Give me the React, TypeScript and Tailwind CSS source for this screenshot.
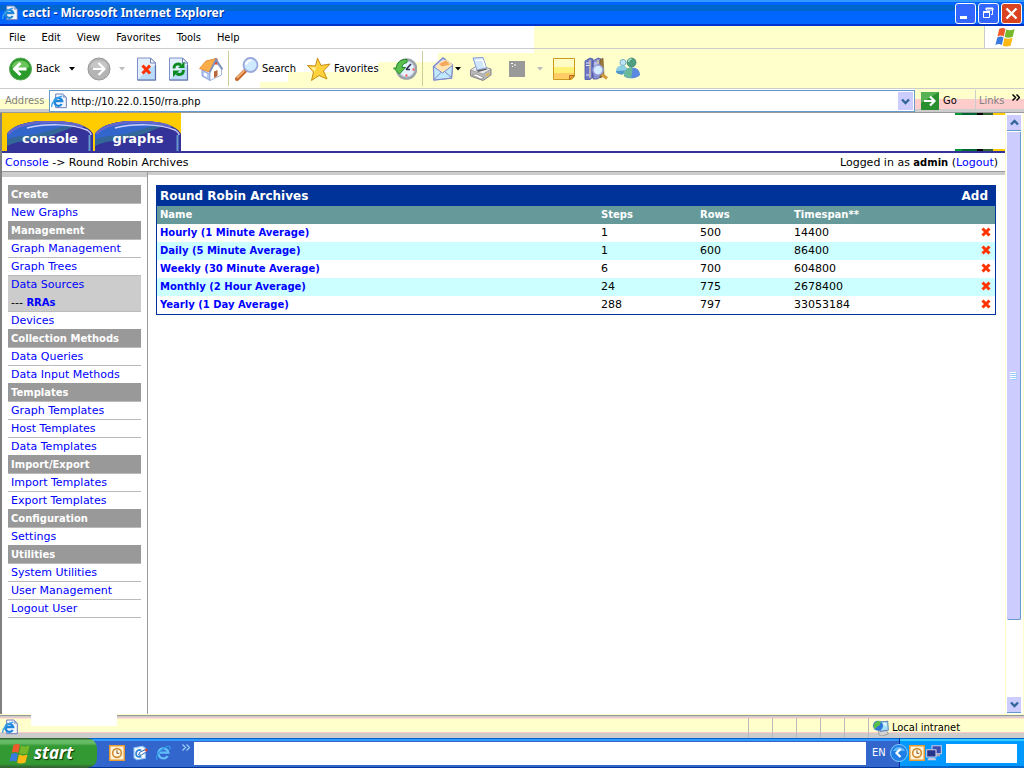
import { ReactNode } from "react";

type MenuItem = { label: string; kind: "header" | "link" | "active" | "sub" };

const menuBar = ["File", "Edit", "View", "Favorites", "Tools", "Help"];

const sideMenu: MenuItem[] = [
  { label: "Create", kind: "header" },
  { label: "New Graphs", kind: "link" },
  { label: "Management", kind: "header" },
  { label: "Graph Management", kind: "link" },
  { label: "Graph Trees", kind: "link" },
  { label: "Data Sources", kind: "active" },
  { label: "RRAs", kind: "sub" },
  { label: "Devices", kind: "link" },
  { label: "Collection Methods", kind: "header" },
  { label: "Data Queries", kind: "link" },
  { label: "Data Input Methods", kind: "link" },
  { label: "Templates", kind: "header" },
  { label: "Graph Templates", kind: "link" },
  { label: "Host Templates", kind: "link" },
  { label: "Data Templates", kind: "link" },
  { label: "Import/Export", kind: "header" },
  { label: "Import Templates", kind: "link" },
  { label: "Export Templates", kind: "link" },
  { label: "Configuration", kind: "header" },
  { label: "Settings", kind: "link" },
  { label: "Utilities", kind: "header" },
  { label: "System Utilities", kind: "link" },
  { label: "User Management", kind: "link" },
  { label: "Logout User", kind: "link" },
];

const archives = [
  { name: "Hourly (1 Minute Average)", steps: 1, rows: 500, timespan: 14400 },
  { name: "Daily (5 Minute Average)", steps: 1, rows: 600, timespan: 86400 },
  { name: "Weekly (30 Minute Average)", steps: 6, rows: 700, timespan: 604800 },
  { name: "Monthly (2 Hour Average)", steps: 24, rows: 775, timespan: 2678400 },
  { name: "Yearly (1 Day Average)", steps: 288, rows: 797, timespan: 33053184 },
];

/* ---------- icons ---------- */

function Icon({ size = 24, children }: { size?: number; children: ReactNode }) {
  return (
    <svg width={size} height={size} viewBox="0 0 24 24" className="shrink-0" aria-hidden="true">
      {children}
    </svg>
  );
}

function Caret({ className = "" }: { className?: string }) {
  return (
    <svg width="6" height="4" viewBox="0 0 6 4" className={`shrink-0 ${className}`} aria-hidden="true">
      <path d="M0 0h6L3 3.5z" fill="currentColor" />
    </svg>
  );
}

function PageShape() {
  return (
    <>
      <path d="M2.500 1h13l5 5v17h-18z" fill="#e2effd" stroke="#8090c8" />
      <path d="M3 22.500L14 11l6-2v13.500z" fill="#b8dcfa" />
      <path d="M20.500 8v15h-18" fill="none" stroke="#5f6ea8" strokeWidth="1.200" />
      <path d="M15.500 1v5h5z" fill="#fff" stroke="#7080b8" />
    </>
  );
}

function IePage({ size = 16 }: { size?: number }) {
  return (
    <Icon size={size}>
      <path d="M7 1.500h11l5 5V22H7z" fill="#f4f7ff" stroke="#6b7fb8" strokeWidth="1.500" />
      <path d="M18 1v6h5z" fill="#99a8d8" />
      <path
        d="M16 16.500a6 6 0 1 1 .8-4.500H5"
        fill="none"
        stroke="#1d86d8"
        strokeWidth="3.400"
      />
      <path d="M1.500 21C-1 15 9 5.500 17 4.500" fill="none" stroke="#3fa4ea" strokeWidth="2" />
    </Icon>
  );
}

function IeLogo({ size = 16 }: { size?: number }) {
  return (
    <Icon size={size}>
      <path d="M19 16.500a7.500 7.500 0 1 1 1-5H6" fill="none" stroke="#63bdf8" strokeWidth="3.600" />
      <path d="M3 22C-1 16 13 2 21 2c3 0 2 3 1 5" fill="none" stroke="#2f97e8" strokeWidth="1.800" />
    </Icon>
  );
}

function WinFlag({ size = 20 }: { size?: number }) {
  return (
    <Icon size={size}>
      <path d="M5 2.500C8 .8 10.500 1 12.500 2.300l-2 9C8.500 10 6 9.800 3 11.300z" fill="#f0592a" />
      <path d="M13.500 3c3 1.300 6 1.300 10-.5l-2.200 9.300c-3.500 1.500-7 1.500-9.800.2z" fill="#76b82a" />
      <path d="M2.700 12.500c3-1.400 5.500-1.300 7.500 0l-2 9C6 20 3.500 20 .5 21.500z" fill="#3a7be0" />
      <path d="M11.300 13.200c2.800 1.300 6 1.300 9.800-.2l-2.200 9.300c-3.500 1.500-7 1.500-9.600.2z" fill="#fdb913" />
    </Icon>
  );
}

function BackIcon() {
  return (
    <Icon>
      <circle cx="12.500" cy="12" r="11" fill="#2a9a2a" stroke="#5aa85a" />
      <path d="M3.500 10a9.500 9.500 0 0 1 18 0c-5 2.500-12 2.500-18 0z" fill="#6cc45c" />
      <path d="M12.500 6L6.500 12l6 6M7 12h11.500" fill="none" stroke="#fff" strokeWidth="3" />
    </Icon>
  );
}

function ForwardIcon() {
  return (
    <Icon>
      <circle cx="12" cy="12" r="11" fill="#b4b4b4" stroke="#999" />
      <path d="M3 10a9.500 9.500 0 0 1 18 0c-5 2.500-12 2.500-18 0z" fill="#c6c6c6" />
      <path d="M11.500 6l6 6-6 6M17 12H6" fill="none" stroke="#fff" strokeWidth="2.200" />
    </Icon>
  );
}

function StopIcon() {
  return (
    <Icon>
      <PageShape />
      <path d="M7.500 8.500l7.500 8M15 8.500l-7.500 8" stroke="#ff3300" strokeWidth="3" />
    </Icon>
  );
}

function RefreshIcon() {
  return (
    <Icon>
      <PageShape />
      <path d="M7 11.500C7 7 11 6 14 8" fill="none" stroke="#0a8a1e" strokeWidth="2.800" />
      <path d="M11 11h6.500V4.500z" fill="#0a8a1e" />
      <path d="M16.500 13c0 4.500-4 5.500-7 3.500" fill="none" stroke="#0a8a1e" strokeWidth="2.800" />
      <path d="M12.500 13.500H6V20z" fill="#0a8a1e" />
    </Icon>
  );
}

function HomeIcon() {
  return (
    <Icon>
      <path d="M3 13l8 4v6.500L3 19z" fill="#b4c8f4" stroke="#8098d4" strokeWidth=".8" />
      <path d="M11 14l6-8.500 5.500 7V18L11 23.500z" fill="#fff" stroke="#90a4d8" strokeWidth=".8" />
      <path d="M15.500 1.500h3v6h-3z" fill="#d8452a" />
      <path d="M.5 11.500L7 4l10-2.500L10.500 15z" fill="#fbae48" stroke="#d98332" strokeWidth=".8" />
      <path d="M10.500 15.500L17 2.500l6.500 10" fill="none" stroke="#8090b8" strokeWidth="1.800" />
      <path d="M15 14.500l3.500-1.500v6L15 21z" fill="#b8673a" />
      <path d="M5 15.500l3 1.500v3l-3-1.500z" fill="#fff" />
    </Icon>
  );
}

function SearchIcon() {
  return (
    <Icon>
      <path d="M2 22l8.500-8.500" stroke="#c66a2e" strokeWidth="4" strokeLinecap="round" />
      <path d="M2 21L9.500 13.500" stroke="#f8b878" strokeWidth="1.600" />
      <circle cx="15.500" cy="8" r="7" fill="#cfeaff" stroke="#98a8dc" strokeWidth="1.800" />
      <path d="M11 7.500a5 5 0 0 1 5.500-4" fill="none" stroke="#fff" strokeWidth="2.200" />
    </Icon>
  );
}

function StarIcon() {
  return (
    <Icon>
      <path
        d="M10.500 1l3.500 7.500 9-1.500-6.500 7 3.500 8-8-3.500L4.500 23.500l2-8.500L.5 8.500l8 .5z"
        fill="#ffd23c"
        stroke="#c98a14"
        strokeLinejoin="round"
      />
      <path d="M10.500 4l-1.300 6.500-6-.5 4.500 4.500-1 5z" fill="#fff2a0" />
    </Icon>
  );
}

function HistoryIcon() {
  return (
    <Icon>
      <circle cx="13.500" cy="12" r="9.500" fill="#e4f2fd" stroke="#9aa4a8" strokeWidth="2.600" />
      <circle cx="13.500" cy="12" r="8" fill="none" stroke="#b8c4d8" />
      <path d="M13 12.500l5-5.500M13 12.500h4" stroke="#335" strokeWidth="1.600" />
      <path d="M13.500 17.500v2M19.500 12.500h2" stroke="#f44" strokeWidth="1.800" />
      <path d="M14 2.500C7.500 2 3.500 6 3.500 11H.5l6 6 6-6.500H9C9 8 11 6 14 5.500z" fill="#5cc04e" stroke="#1f8a2a" />
    </Icon>
  );
}

function MailIcon() {
  return (
    <Icon>
      <path d="M2.500 9.500L12 1l9.500 7-1 13L3 23z" fill="#c6dcfb" stroke="#8088c8" strokeWidth="1.400" />
      <path d="M5 9l5-4.500 6-2 5 5-2 7-8 3-6-4z" fill="#ffe4b4" />
      <path d="M8 7l7-3.500 4 4-8 2z" fill="#f3a85c" />
      <path d="M2.500 9.500l9 6.500 10-7.500-1 12.500L3 23z" fill="#bfe8fc" stroke="#8088c8" />
      <path d="M3 22.500l7.500-7.500M20.500 20.500l-7-6" stroke="#8088c8" />
    </Icon>
  );
}

function PrinterIcon() {
  return (
    <Icon>
      <path d="M1.500 13l7-4.500L22 12v6l-8 5.500L1.500 19z" fill="#b8b8b8" stroke="#868686" />
      <path d="M1.500 13l7-4.500L22 12l-8 5z" fill="#ececec" stroke="#9a9a9a" strokeWidth=".8" />
      <path d="M4 1l10-.5L17.500 11 8 13z" fill="#cfe6fd" stroke="#8a9cdc" />
      <path d="M6.500 3.500l7-.5 2.500 7" fill="none" stroke="#fff" strokeWidth="1.500" />
      <path d="M7 13.500l10-2 1.500 1-9 2.500z" fill="#666" />
      <path d="M3 18l9 4 3-1.500-8-3.500z" fill="#fff" stroke="#8a8a8a" strokeWidth=".7" />
      <path d="M17 18.500l3-2" stroke="#e8b83a" strokeWidth="1.600" />
    </Icon>
  );
}

function EditIcon() {
  return (
    <Icon>
      <path d="M4 4h16v16H4z" fill="#999" />
      <path d="M6 6h2v1H6zM9 7.500h2v1H9zM7 9h1v1H7z" fill="#fff" />
    </Icon>
  );
}

function NoteIcon() {
  return (
    <Icon>
      <path d="M1.500 1.500h21v18l-3 3h-18z" fill="#fff176" stroke="#c99a1c" />
      <path d="M2 2h20v8H2z" fill="#fffbc4" />
      <path d="M2 16h20v3.500l-3 2.500H2z" fill="#ffcc66" />
      <path d="M17.500 22.500v-4h5z" fill="#f0a040" stroke="#b5701a" />
    </Icon>
  );
}

function ResearchIcon() {
  return (
    <Icon>
      <path d="M1 4l5-3 3 1v18l-3 2.500H1z" fill="#7078c8" stroke="#4850a0" strokeWidth=".8" />
      <path d="M9 4l5-3 3 1v18l-4 2H9z" fill="#8890d0" stroke="#4850a0" strokeWidth=".8" />
      <path d="M16 3l3-2 1 18-4 2z" fill="#9a7a3a" stroke="#6a5220" strokeWidth=".6" />
      <path d="M2 6h4M2 8.500h4M2 18h4M10 6h4M10 8h3" stroke="#e4e8ff" />
      <path d="M6 3v18M14 3v4" stroke="#d8c89a" strokeWidth="1.400" />
      <path d="M18 17.500l5 4" stroke="#d09a3e" strokeWidth="3" />
      <circle cx="14" cy="13" r="5" fill="#d4ecff" stroke="#98a0dc" strokeWidth="1.600" />
    </Icon>
  );
}

function MessengerIcon() {
  return (
    <Icon>
      <path d="M0 14c0-4 3-5.500 6-5.500s6 1.500 5 6l-4 3c-4 0-7-1-7-3.500z" fill="#8fd0e4" />
      <path d="M0 14c0 2.500 3 3.500 7 3.500l2-4z" fill="#4f98c8" />
      <circle cx="7" cy="5.500" r="3" fill="#bfe4f4" stroke="#6aa8c4" strokeWidth=".9" />
      <path d="M8 19c0-6 3-8.500 8-8.500s8 3 8 7.500c-3 4-13 4.500-16 1z" fill="#5a8ae0" />
      <path d="M8 19c0-6 3-8.500 8-8.500 1 3 0 6-1 10.500-2.500 0-5.500-.5-7-2z" fill="#6ab89a" />
      <circle cx="15.500" cy="5.500" r="4.500" fill="#4f9e82" stroke="#2f7a68" strokeWidth=".7" />
      <path d="M12.500 5a3 3 0 0 1 3-3" fill="none" stroke="#a8dcc8" strokeWidth="1.600" />
    </Icon>
  );
}

function ClockIcon() {
  return (
    <Icon size={16}>
      <path d="M1 1h22v22H1z" fill="#fff3d8" stroke="#e89a34" strokeWidth="2.500" />
      <circle cx="12" cy="12" r="6.500" fill="#fffbe8" stroke="#d08c2e" strokeWidth="2.400" />
      <path d="M12 8v4.500h3.500" fill="none" stroke="#8a5a20" strokeWidth="1.600" />
    </Icon>
  );
}

function DesktopIcon() {
  return (
    <Icon size={16}>
      <path d="M3 4l13-2 4 3v15l-13 2-4-3z" fill="#f4f9ff" stroke="#8cc4f4" strokeWidth="1.600" />
      <path d="M14 17c-5 2-8 0-8-4s4-7 8-5" fill="none" stroke="#2c86d8" strokeWidth="2.600" />
      <path d="M10 15l1.500-4 8.500-4 2 3-8 5z" fill="#fff" stroke="#1f5fb0" strokeWidth="1.400" />
      <path d="M19 7l3-2 2 3-3 2z" fill="#e0442a" />
    </Icon>
  );
}

function NetworkIcon() {
  return (
    <Icon size={16}>
      <path d="M9 1h14v12H9z" fill="#3c4cae" stroke="#c8cfe8" strokeWidth="1.600" />
      <path d="M14 13h7v4h-7z" fill="#aab" />
      <path d="M1 7h14v11H1z" fill="#26348c" stroke="#c8cfe8" strokeWidth="1.600" />
      <path d="M4 19h9l3 4H2z" fill="#c8cbe0" />
    </Icon>
  );
}

function IntranetIcon() {
  return (
    <Icon size={16}>
      <path d="M8 16l12-1 3 6-10 3-4-2z" fill="#d4d4d4" stroke="#888" />
      <path d="M8 3l14-1 1 13-12 2z" fill="#a4e0fa" stroke="#6a86b8" strokeWidth="1.600" />
      <path d="M13 5l7-.5.5 6z" fill="#dff6ff" />
      <circle cx="7.500" cy="8.500" r="7.500" fill="#2f76d8" />
      <path d="M3 4c3-3 7-3 9-1l-2 5-4 2-3 4C0 11 0 7 3 4z" fill="#5cc048" />
    </Icon>
  );
}

function DeleteIcon() {
  return (
    <svg width="10" height="10" viewBox="0 0 10 10" className="block" aria-hidden="true">
      <path d="M1.500 1.500l7 7M8.500 1.500l-7 7" stroke="#ff3300" strokeWidth="3" />
    </svg>
  );
}

/* ---------- browser chrome ---------- */

function TitleBar() {
  return (
    <header className="flex h-[26px] shrink-0 items-center bg-[linear-gradient(#39f_2px,#06f_2px,#06f_5px,#06c_5px,#06c_11px,#06f_11px,#06f_24px,#03c_24px)] px-[2px]">
      <IePage />
      <h1 className="ml-1 flex-1 font-['Noto_Sans',sans-serif] text-[12px] leading-4 font-bold text-white [text-shadow:1px_1px_0_#003399]">
        cacti - Microsoft Internet Explorer
      </h1>
      <div className="flex gap-[2px]">
        <button aria-label="Minimize" className="h-[21px] w-[21px] rounded-[3px] border border-white bg-[#36f]">
          <svg width="19" height="19" viewBox="0 0 19 19" aria-hidden="true">
            <path d="M4 12h7v3H4z" fill="#fff" />
          </svg>
        </button>
        <button aria-label="Restore" className="h-[21px] w-[21px] rounded-[3px] border border-white bg-[#36f]">
          <svg width="19" height="19" viewBox="0 0 19 19" aria-hidden="true">
            <path d="M7.500 6V4.500h6v6H12M7 4h7v2H7z" fill="none" stroke="#fff" />
            <path d="M4.500 8.500h6v5h-6z" fill="none" stroke="#fff" />
            <path d="M4 7h7v2H4z" fill="#fff" />
          </svg>
        </button>
        <button aria-label="Close" className="h-[21px] w-[21px] rounded-[3px] border border-white bg-[#d9431f]">
          <svg width="19" height="19" viewBox="0 0 19 19" aria-hidden="true">
            <path d="M4.500 4.500l10 10M14.500 4.500l-10 10" stroke="#fff" strokeWidth="2.400" />
          </svg>
        </button>
      </div>
    </header>
  );
}

function MenuBar() {
  return (
    <nav className="flex h-[23px] shrink-0 border-b border-[#ccc] bg-[linear-gradient(to_right,#fff_534px,#ffc_534px)]">
      <div className="flex flex-1 items-center gap-4 pt-px pl-[9px]">
        {menuBar.map((label) => (
          <button key={label}>{label}</button>
        ))}
      </div>
      <div className="flex w-10 items-center justify-center border-l border-[#ccc] bg-white">
        <WinFlag />
      </div>
    </nav>
  );
}

function ToolButton({ label, children }: { label: string; children: ReactNode }) {
  return (
    <button aria-label={label} className="flex w-8 justify-center">
      {children}
    </button>
  );
}

function Toolbar() {
  return (
    <div className="flex h-10 shrink-0 items-center border-b border-[#ccc] bg-white bg-[image:linear-gradient(#ffc,#ffc),linear-gradient(#ffc,#ffc),linear-gradient(#ffc,#ffc),linear-gradient(#ffc,#ffc),linear-gradient(#ffc,#ffc)] bg-[position:534px_0,438px_4px,378px_13px,288px_23px,260px_33px] bg-no-repeat pl-2">
      <button className="flex w-[76px] items-center">
        <BackIcon />
        <span className="ml-1 flex-1 text-left">Back</span>
        <Caret className="mr-[9px]" />
      </button>
      <button aria-label="Forward" className="flex w-[47px] items-center pl-[3px] text-[#bbb]">
        <ForwardIcon />
        <Caret className="ml-2" />
      </button>
      <ToolButton label="Stop"><StopIcon /></ToolButton>
      <ToolButton label="Refresh"><RefreshIcon /></ToolButton>
      <ToolButton label="Home"><HomeIcon /></ToolButton>
      <div className="mx-px h-[35px] w-px bg-[#cc9]" />
      <button className="flex w-[75px] items-center gap-[3px] pl-[5px]">
        <SearchIcon />
        Search
      </button>
      <button className="flex w-[84px] items-center gap-[3px] pl-[2px]">
        <StarIcon />
        Favorites
      </button>
      <ToolButton label="History"><HistoryIcon /></ToolButton>
      <div className="mx-px h-[35px] w-px bg-[#cc9]" />
      <button aria-label="Mail" className="flex w-[41px] items-center pl-[7px]">
        <MailIcon />
        <Caret />
      </button>
      <ToolButton label="Print"><PrinterIcon /></ToolButton>
      <button aria-label="Edit" className="flex w-[51px] items-center pl-2 text-[#bbb]">
        <EditIcon />
        <Caret className="ml-2" />
      </button>
      <ToolButton label="Discuss"><NoteIcon /></ToolButton>
      <ToolButton label="Research"><ResearchIcon /></ToolButton>
      <ToolButton label="Messenger"><MessengerIcon /></ToolButton>
    </div>
  );
}

function Chevron({ up = false }: { up?: boolean }) {
  return (
    <svg width="9" height="7" viewBox="0 0 9 7" aria-hidden="true">
      <path d={up ? "M1 5.500l3.500-3.500L8 5.500" : "M1 1.500L4.500 5 8 1.500"} fill="none" stroke="#369" strokeWidth="2.400" />
    </svg>
  );
}

function AddressBar() {
  return (
    <form className="flex h-6 shrink-0 items-stretch border-b border-[#999] bg-[linear-gradient(#fff_10px,#ffc_10px,#ffc_20px,#ccc_20px)]">
      <label htmlFor="address" className="flex w-[49px] items-center pt-px pl-[5px] text-[#808080]">
        Address
      </label>
      <div className="mt-px flex flex-1 items-center gap-1 border border-[#69c] bg-white px-px">
        <IePage />
        <input id="address" defaultValue="http://10.22.0.150/rra.php" className="min-w-0 flex-1 pt-px outline-none" />
        <button type="button" aria-label="Show addresses" className="flex h-[18px] w-[15px] items-center justify-center bg-[#ccf]">
          <Chevron />
        </button>
      </div>
      <div className="flex w-[109px] bg-[linear-gradient(#ffc_10px,#fcc_10px,#fcc_20px,#ccc_20px)] pt-px">
        <button type="button" className="flex w-[60px] items-center gap-1 pl-[6px]">
          <svg width="18" height="18" viewBox="0 0 18 18" aria-hidden="true">
            <path d="M0 0h18v18H0z" fill="#2a8f2e" />
            <path d="M0 0h18L0 11z" fill="#57b254" />
            <path d="M3 9h10M9 4.500L13.500 9 9 13.500" fill="none" stroke="#fff" strokeWidth="2.200" />
          </svg>
          Go
        </button>
        <button type="button" className="flex flex-1 items-center gap-2 border-l border-[#ccc] pl-[3px] text-[#808080]">
          Links
          <svg width="8" height="7" viewBox="0 0 8 7" className="mb-2" aria-hidden="true">
            <path d="M.5.500l3 3-3 3M4.500.500l3 3-3 3" fill="none" stroke="#000" strokeWidth="1.500" />
          </svg>
        </button>
      </div>
    </form>
  );
}

function ScrollBar() {
  return (
    <div className="flex w-[19px] shrink-0 flex-col border-x border-[#ffc] bg-white pt-[2px] pr-[2px] pb-px pl-px">
      <button aria-label="Scroll up" className="flex h-4 items-center justify-center border-b border-[#69c] bg-[#ccf]">
        <Chevron up />
      </button>
      <div className="mt-px flex h-[488px] items-center justify-center rounded-b-[2px] border-r border-b border-[#69c] bg-[#ccf]">
        <svg width="7" height="8" viewBox="0 0 7 8" aria-hidden="true">
          <path d="M0 .5h6M0 2.500h6M0 4.500h6M0 6.500h6" stroke="#fff" />
          <path d="M1 1.500h6M1 3.500h6M1 5.500h6M1 7.500h6" stroke="#9cf" />
        </svg>
      </div>
      <div className="flex-1" />
      <button aria-label="Scroll down" className="flex h-4 items-center justify-center border-b border-[#69c] bg-[#ccf]">
        <Chevron />
      </button>
    </div>
  );
}

/* ---------- cacti page ---------- */

function Tab({ label }: { label: string }) {
  return (
    <a href="#" className="relative flex h-[30px] w-[86px] items-center justify-center font-bold text-white">
      <svg viewBox="0 0 86 30" className="absolute inset-0 h-full w-full" aria-hidden="true">
        <path d="M0 30V13C8 2 25 0 43 0s38 3 43 13v17z" fill="#339" />
        <path d="M0 25V13C8 2 25 0 43 0c12 0 22 1 31 4C56 8 48 16 24 19 14 20 6 22 0 25z" fill="#369" />
        <path d="M0 19v-6C8 2 25 0 43 0c12 0 22 1 29 4C52 4 44 11 24 14 12 15 6 16 0 19z" fill="#36c" />
        <path d="M1 13C10 3 28 1 43 1c14 0 25 1 33 5" fill="none" stroke="#66c" strokeWidth="2.500" />
        <path d="M20 7c20-5 45-4 60 2 3 2 4 3 4 5" fill="none" stroke="#ccf" strokeWidth="1.500" />
        <path d="M82.500 14v16" stroke="#69c" strokeWidth="2" />
      </svg>
      <span className="relative mt-[5px] text-[13px] leading-4">{label}</span>
    </a>
  );
}

function LogoStrip() {
  return <div className="h-[2px] w-[50px] bg-[linear-gradient(to_right,#093_7px,#063_7px,#063_22px,#000_22px,#000_28px,#363_28px,#363_38px,#fc0_38px)]" />;
}

function SideItem({ label, kind }: MenuItem) {
  if (kind === "header") {
    return <li className="h-[18px] bg-[#999] px-[3px] text-[10px] leading-[19px] font-bold text-white">{label}</li>;
  }
  if (kind === "sub") {
    return (
      <li className="h-[18px] bg-[#ccc] px-[3px] leading-[19px]">
        --- <a href="#" className="text-[10px] font-bold text-[#00f]">{label}</a>
      </li>
    );
  }
  return (
    <li className={`h-[18px] border-t border-[#bbb] px-[3px] leading-[17px] ${kind === "active" ? "bg-[#ccc]" : ""}`}>
      <a href="#" className="text-[#00f]">{label}</a>
    </li>
  );
}

function ArchiveTable() {
  return (
    <table className="w-full table-fixed border-separate border-spacing-0 border border-[#039] text-left">
      <colgroup>
        <col />
        <col className="w-[99px]" />
        <col className="w-[94px]" />
        <col className="w-[185px]" />
        <col className="w-[20px]" />
      </colgroup>
      <thead className="text-[10px] text-white">
        <tr className="h-5 bg-[#039] text-[12px] leading-5">
          <th colSpan={3} className="pl-[3px]">Round Robin Archives</th>
          <th colSpan={2} className="pr-[7px] text-right"><a href="#">Add</a></th>
        </tr>
        <tr className="h-[18px] bg-[#699] leading-[18px]">
          <th className="pl-[3px]">Name</th>
          <th className="pl-1">Steps</th>
          <th className="pl-1">Rows</th>
          <th className="pl-1">Timespan**</th>
          <th />
        </tr>
      </thead>
      <tbody>
        {archives.map((row) => (
          <tr key={row.name} className="h-[18px] leading-[18px] odd:bg-white even:bg-[#cff]">
            <td className="pl-[3px] text-[10px]"><a href="#" className="font-bold text-[#00f]">{row.name}</a></td>
            <td className="pl-1">{row.steps}</td>
            <td className="pl-1">{row.rows}</td>
            <td className="pl-1">{row.timespan}</td>
            <td className="pb-[2px] pl-[6px]">
              <button aria-label={`Delete ${row.name}`} className="block"><DeleteIcon /></button>
            </td>
          </tr>
        ))}
      </tbody>
    </table>
  );
}

function CactiPage() {
  return (
    <div className="flex min-w-0 flex-1 flex-col border-l-2 border-[#808080] bg-white font-['DejaVu_Sans',sans-serif] text-[11px] text-black">
      <div className="flex h-10 shrink-0 items-stretch justify-between border-b-2 border-[#339]">
        <div className="flex items-end gap-[2px] bg-[#fc0] pl-[5px]">
          <Tab label="console" />
          <Tab label="graphs" />
        </div>
        <div className="flex flex-col justify-between">
          <LogoStrip />
          <LogoStrip />
        </div>
      </div>
      <div className="flex h-[19px] shrink-0 items-center justify-between border-b border-[#999] pt-px pr-[7px] pl-[3px]">
        <p><a href="#" className="text-[#00f]">Console</a> -&gt; Round Robin Archives</p>
        <p>Logged in as <b className="text-[10px]">admin</b> (<a href="#" className="text-[#00f]">Logout</a>)</p>
      </div>
      <div className="flex flex-1">
        <aside className="w-[146px] shrink-0 border-r border-[#999]">
          <div className="h-[5px] bg-[#ccc]" />
          <ul className="mx-[6px] mt-2 border-b border-[#bbb]">
            {sideMenu.map((item) => (
              <SideItem key={item.label} {...item} />
            ))}
          </ul>
        </aside>
        <main className="flex-1">
          <div className="h-[3px] bg-[#ccc]" />
          <div className="mt-[10px] pr-[9px] pl-2">
            <ArchiveTable />
          </div>
        </main>
      </div>
    </div>
  );
}

/* ---------- status bar and taskbar ---------- */

function StatusBar() {
  return (
    <footer className="flex h-6 shrink-0 bg-[linear-gradient(#ffc_1px,#999_1px,#999_2px,#ccc_2px,#ccc_3px,#fcc_4px,#ffc_5px,#ffc_18px,#fcc_18px,#fcc_19px,#ccc_19px)]">
      <div className="flex w-[31px] items-center pt-[2px] pl-[2px]"><IePage /></div>
      <div className="h-3 w-[86px] bg-white" />
      <div className="flex-1" />
      {[0, 1, 2, 3, 4].map((n) => (
        <div key={n} className="mt-1 w-6 border-l border-[#bbb]" />
      ))}
      <div className="mt-1 flex w-[156px] items-center gap-[3px] border-l border-[#bbb] pl-1">
        <IntranetIcon />
        Local intranet
      </div>
    </footer>
  );
}

function Taskbar() {
  return (
    <footer className="flex h-[30px] shrink-0 items-stretch bg-[linear-gradient(#06c_1px,#39f_1px,#39f_3px,#36c_3px,#36c_29px,#039_29px)] text-white">
      <button className="flex w-[97px] items-center gap-1 rounded-r-[10px] bg-[linear-gradient(#363_1px,#6b6_2px,#6b6_5px,#393_8px,#393_26px,#363_29px)] pl-[9px]">
        <WinFlag size={21} />
        <span className="font-['Open_Sans',sans-serif] text-[17px] leading-5 font-bold italic [text-shadow:1px_1px_1px_#030]">start</span>
      </button>
      <div className="flex w-[97px] items-center gap-[7px] pl-3">
        <button aria-label="Reminders"><ClockIcon /></button>
        <button aria-label="Show desktop"><DesktopIcon /></button>
        <button aria-label="Internet Explorer"><IeLogo /></button>
        <svg width="8" height="7" viewBox="0 0 8 7" className="mb-3 ml-1" aria-hidden="true">
          <path d="M.5.500l3 3-3 3M4.500.500l3 3-3 3" fill="none" stroke="#9cf" strokeWidth="1.300" />
        </svg>
      </div>
      <div className="mt-1 mb-[3px] flex-1 bg-white" />
      <div className="flex w-[33px] items-center pl-[6px]">EN</div>
      <div className="flex w-[125px] items-center border-l border-[#039] bg-[linear-gradient(#06c_1px,#3cf_1px,#3cf_3px,#09f_3px,#09f_28px,#06c_28px)]">
        <button aria-label="Show hidden icons" className="-ml-[10px]">
          <svg width="18" height="18" viewBox="0 0 18 18" aria-hidden="true">
            <circle cx="9" cy="9" r="8.500" fill="#1e7fe6" stroke="#8cf" />
            <path d="M3 7a6.500 6.500 0 0 1 12 0z" fill="#5fb6f8" />
            <path d="M10.500 5L6.500 9l4 4" fill="none" stroke="#fff" strokeWidth="2.200" />
          </svg>
        </button>
        <div className="ml-px flex gap-px">
          <ClockIcon />
          <NetworkIcon />
        </div>
        <div className="mr-[7px] ml-1 h-[19px] flex-1 bg-white" />
      </div>
    </footer>
  );
}

export default function App() {
  return (
    <div className="flex h-screen flex-col bg-white font-['DejaVu_Sans_Condensed','Liberation_Sans',sans-serif] text-[11px] leading-[14px] text-black">
      <TitleBar />
      <MenuBar />
      <Toolbar />
      <AddressBar />
      <div className="flex min-h-0 flex-1">
        <CactiPage />
        <ScrollBar />
      </div>
      <StatusBar />
      <Taskbar />
    </div>
  );
}
